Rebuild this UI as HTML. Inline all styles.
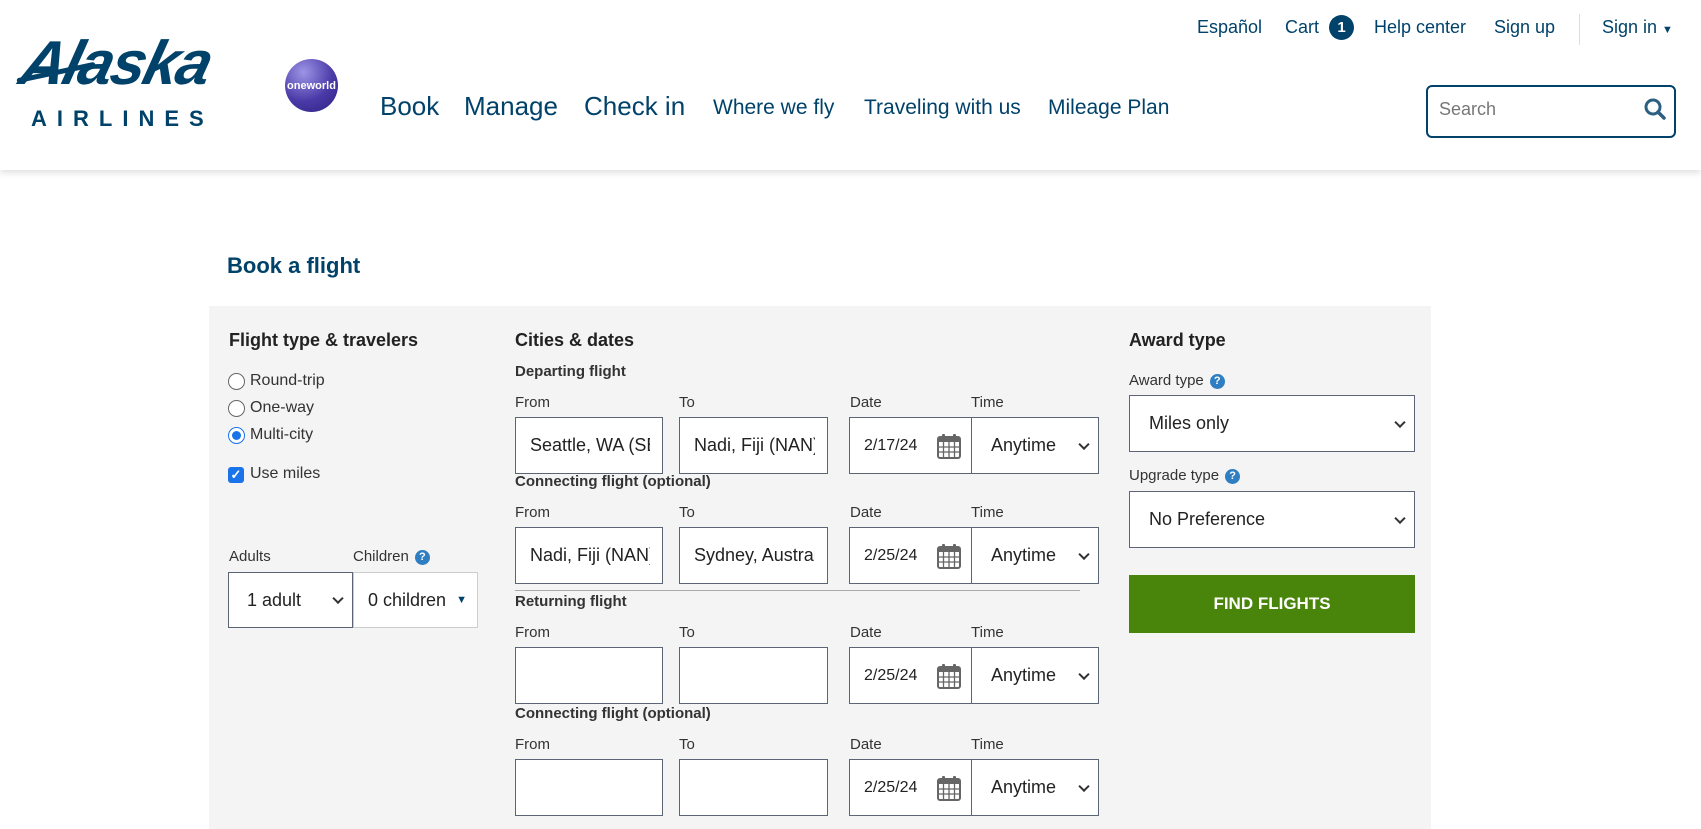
<!DOCTYPE html>
<html><head><meta charset="utf-8"><style>
*{box-sizing:border-box;margin:0;padding:0}
body{width:1701px;height:829px;overflow:hidden;background:#fff;font-family:"Liberation Sans",sans-serif;color:#222;position:relative}
.a{position:absolute;white-space:nowrap}
.nav{color:#01426a}
.hdr{position:absolute;left:0;top:0;width:1701px;height:170px;background:#fff;box-shadow:0 3px 6px rgba(0,0,0,.12)}
.panel{position:absolute;left:209px;top:306px;width:1222px;height:523px;background:#f4f4f4}
.h{font-weight:bold;font-size:18px;color:#222}
.sh{font-weight:bold;font-size:15px;color:#333}
.lb{font-size:15px;color:#333}
.box{position:absolute;background:#fff;border:1px solid #5b6575;font-size:18px;color:#222;padding-left:14px;display:flex;align-items:center;overflow:hidden;white-space:nowrap}
.box .tx{display:block;overflow:hidden;width:100%}
.chev{position:absolute;right:10px;top:50%;width:8px;height:8px;border-right:2px solid #333;border-bottom:2px solid #333;transform:translateY(-70%) rotate(45deg)}
.cal{position:absolute;right:10px;top:50%;transform:translateY(-50%)}
.q{display:inline-block;width:15px;height:15px;border-radius:50%;background:#2f7ec1;color:#fff;font-size:11px;font-weight:bold;text-align:center;line-height:15px;vertical-align:1px;margin-left:6px}
.radio{position:absolute;width:17px;height:17px;border:1.5px solid #666;border-radius:50%;background:#fff}
</style></head><body>
<div class="hdr"></div>
<div class="a" style="left:22px;top:28px;font-family:'Liberation Sans',sans-serif;font-style:italic;font-weight:bold;font-size:62px;color:#01426a;letter-spacing:-2px;transform:skewX(-14deg)">Alaska</div>
<div class="a" style="left:16px;top:70px;width:80px;height:5px;background:#01426a;transform:rotate(-12deg);border-radius:3px"></div>
<div class="a" style="left:31px;top:106px;font-weight:bold;font-size:22px;color:#01426a;letter-spacing:10px">AIRLINES</div>
<div class="a" style="left:285px;top:59px;width:53px;height:53px;border-radius:50%;background:radial-gradient(circle at 35% 25%,#9d95e6,#4a3aa8 55%,#2c2180);color:#fff;font-size:11px;font-weight:bold;display:flex;align-items:center;justify-content:center">oneworld</div>
<div class="a nav" style="left:380px;top:91px;font-size:26px">Book</div>
<div class="a nav" style="left:464px;top:91px;font-size:26px">Manage</div>
<div class="a nav" style="left:584px;top:91px;font-size:26px">Check in</div>
<div class="a nav" style="left:713px;top:96px;font-size:21px">Where we fly</div>
<div class="a nav" style="left:864px;top:96px;font-size:21px">Traveling with us</div>
<div class="a nav" style="left:1048px;top:96px;font-size:21px">Mileage Plan</div>
<div class="a nav" style="left:1197px;top:17px;font-size:18px">Español</div>
<div class="a nav" style="left:1285px;top:17px;font-size:18px">Cart</div>
<div class="a" style="left:1329px;top:15px;width:25px;height:25px;border-radius:50%;background:#01426a;color:#fff;font-size:15px;font-weight:bold;text-align:center;line-height:25px">1</div>
<div class="a nav" style="left:1374px;top:17px;font-size:18px">Help center</div>
<div class="a nav" style="left:1494px;top:17px;font-size:18px">Sign up</div>
<div class="a" style="left:1579px;top:14px;width:1px;height:31px;background:#ddd"></div>
<div class="a nav" style="left:1602px;top:17px;font-size:18px">Sign in <span style="font-size:11px">▼</span></div>
<div class="a" style="left:1426px;top:85px;width:250px;height:53px;border:2px solid #01426a;border-radius:6px"></div>
<div class="a" style="left:1439px;top:99px;font-size:18px;color:#777">Search</div>
<svg class="a" style="left:1643px;top:97px" width="24" height="24" viewBox="0 0 24 24"><circle cx="10" cy="10" r="7" fill="none" stroke="#2d5f80" stroke-width="3"/><line x1="15" y1="15" x2="21" y2="21" stroke="#2d5f80" stroke-width="3.5" stroke-linecap="round"/></svg>

<div class="a" style="left:227px;top:253px;font-size:22px;font-weight:bold;color:#01426a">Book a flight</div>
<div class="panel"></div>

<div class="a h" style="left:229px;top:330px">Flight type &amp; travelers</div>
<div class="radio" style="left:228px;top:373px"></div><div class="a lb" style="left:250px;top:372px;font-size:16px">Round-trip</div>
<div class="radio" style="left:228px;top:400px"></div><div class="a lb" style="left:250px;top:399px;font-size:16px">One-way</div>
<div class="radio" style="left:228px;top:427px;border-color:#1a73e8"><div style="margin:2.5px;width:9px;height:9px;border-radius:50%;background:#1a73e8"></div></div><div class="a lb" style="left:250px;top:426px;font-size:16px">Multi-city</div>
<div class="a" style="left:228px;top:467px;width:16px;height:16px;border-radius:3px;background:#1a73e8;color:#fff;font-size:13px;line-height:16px;text-align:center;font-weight:bold">✓</div><div class="a lb" style="left:250px;top:465px;font-size:16px">Use miles</div>
<div class="a lb" style="left:229px;top:548px">Adults</div>
<div class="a lb" style="left:353px;top:548px">Children<span class="q">?</span></div>
<div class="box" style="left:228px;top:572px;width:125px;height:56px;padding-left:18px">1 adult<span class="chev"></span></div>
<div class="box" style="left:353px;top:572px;width:125px;height:56px;border-color:#ccc">0 children<span style="position:absolute;right:10px;font-size:11px;color:#01426a">▼</span></div>

<div class="a h" style="left:515px;top:330px">Cities &amp; dates</div>
<div class="a" style="left:515px;top:590px;width:565px;height:1px;background:#aaa"></div>

<div class="a h" style="left:1129px;top:330px">Award type</div>
<div class="a lb" style="left:1129px;top:372px">Award type<span class="q">?</span></div>
<div class="box" style="left:1129px;top:395px;width:286px;height:57px;padding-left:19px">Miles only<span class="chev"></span></div>
<div class="a lb" style="left:1129px;top:467px">Upgrade type<span class="q">?</span></div>
<div class="box" style="left:1129px;top:491px;width:286px;height:57px;padding-left:19px">No Preference<span class="chev"></span></div>
<div class="a" style="left:1129px;top:575px;width:286px;height:58px;background:#4a850b;color:#fff;font-weight:bold;font-size:17px;text-align:center;line-height:58px">FIND FLIGHTS</div>

<div id="rows"></div>
<script>
var rows=[[371,"Departing flight","Seattle, WA (SEA)","Nadi, Fiji (NAN)","2/17/24"],[481,"Connecting flight (optional)","Nadi, Fiji (NAN)","Sydney, Australia","2/25/24"],[601,"Returning flight","","","2/25/24"],[713,"Connecting flight (optional)","","","2/25/24"]];
var cal='<svg class="cal" width="24" height="26" viewBox="0 0 24 26"><rect x="1" y="4" width="22" height="21" rx="2" fill="none" stroke="#666" stroke-width="2"/><rect x="1" y="4" width="22" height="5" fill="#666"/><rect x="5" y="1" width="3" height="6" rx="1" fill="#666"/><rect x="16" y="1" width="3" height="6" rx="1" fill="#666"/><path d="M1 14H23M1 19H23M6.5 9V25M12 9V25M17.5 9V25" stroke="#666" stroke-width="1.3"/></svg>';
var h='';
rows.forEach(function(r){var y=r[0];
h+='<div class="a sh" style="left:515px;top:'+(y-8)+'px">'+r[1]+'</div>';
h+='<div class="a lb" style="left:515px;top:'+(y+23)+'px">From</div><div class="a lb" style="left:679px;top:'+(y+23)+'px">To</div><div class="a lb" style="left:850px;top:'+(y+23)+'px">Date</div><div class="a lb" style="left:971px;top:'+(y+23)+'px">Time</div>';
var t=y+46;
h+='<div class="box" style="left:515px;top:'+t+'px;width:148px;height:57px;padding-right:12px"><span class="tx">'+r[2]+'</span></div>';
h+='<div class="box" style="left:679px;top:'+t+'px;width:149px;height:57px;padding-right:12px"><span class="tx">'+r[3]+'</span></div>';
h+='<div class="box" style="left:849px;top:'+t+'px;width:123px;height:57px;font-size:16px">'+r[4]+cal+'</div>';
h+='<div class="box" style="left:971px;top:'+t+'px;width:128px;height:57px;padding-left:19px">Anytime<span class="chev"></span></div>';
});
document.getElementById('rows').innerHTML=h;
</script>
</body></html>
